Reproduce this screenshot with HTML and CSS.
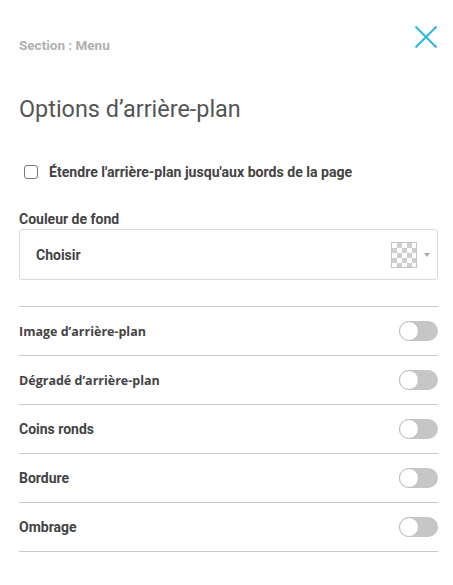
FILE: index.html
```html
<!DOCTYPE html>
<html lang="fr">
<head>
<meta charset="utf-8">
<title>Options d’arrière-plan</title>
<link rel="stylesheet" href="styles.css">
</head>
<body>
<div class="panel">
  <div class="header">
    <div class="crumb">Section : Menu</div>
    <svg class="close" width="24" height="24" viewBox="0 0 24 24" aria-label="Fermer">
      <path d="M1.5 1.5 L22.5 22.5 M22.5 1.5 L1.5 22.5" stroke="#27b8e2" stroke-width="2" fill="none"/>
    </svg>
  </div>

  <h1 class="title">Options d’arrière-plan</h1>

  <label class="check-row">
    <span class="checkbox"></span>
    <span class="check-label">Étendre l'arrière-plan jusqu'aux bords de la page</span>
  </label>

  <div class="field-label">Couleur de fond</div>
  <div class="select">
    <span class="select-text">Choisir</span>
    <span class="swatch"></span>
    <span class="caret"></span>
  </div>

  <div class="options">
    <div class="row"><span class="row-label alt">Image d’arrière-plan</span><span class="toggle"><span class="thumb"></span></span></div>
    <div class="row"><span class="row-label alt">Dégradé d’arrière-plan</span><span class="toggle"><span class="thumb"></span></span></div>
    <div class="row"><span class="row-label">Coins ronds</span><span class="toggle"><span class="thumb"></span></span></div>
    <div class="row"><span class="row-label">Bordure</span><span class="toggle"><span class="thumb"></span></span></div>
    <div class="row"><span class="row-label">Ombrage</span><span class="toggle"><span class="thumb"></span></span></div>
  </div>
</div>
</body>
</html>
```
FILE: styles.css
```css
* { box-sizing: border-box; }
html, body { margin: 0; padding: 0; background: #fff; }
body { font-family: Roboto, "Liberation Sans", sans-serif; color: #444; }

.panel { padding: 25px 15px 0 19px; }

.header { display: flex; justify-content: space-between; align-items: flex-start; height: 29px; }
.crumb { margin-top: 12px; font-size: 13.5px; line-height: 17px; font-weight: 700; color: #b0b0b0; }
.close { display: block; }

.title { margin: 42px 0 0; font-size: 23.4px; line-height: 27px; font-weight: 400; color: #555; }

.check-row { display: flex; align-items: center; height: 20px; margin-top: 39px; padding-left: 5px; }
.checkbox { width: 14px; height: 14px; border: 1.5px solid #777; border-radius: 3px; background: #fff; flex: none; }
.check-label { margin-left: 11px; font-size: 14.1px; font-weight: 700; color: #444; }

.field-label { margin-top: 29px; font-size: 14px; line-height: 16px; font-weight: 700; color: #444; }

.select { margin-top: 2px; height: 51px; border: 1px solid #dadada; border-radius: 3px; display: flex; align-items: center; padding: 0 7px 0 16px; }
.select-text { flex: 1; font-size: 14px; font-weight: 700; color: #444; }
.swatch { width: 26px; height: 26px; border: 1px solid #c4c4c4; background: repeating-conic-gradient(#cfcfcf 0 25%, #fff 0 50%) 0 0 / 10px 10px; }
.caret { margin-left: 7px; width: 0; height: 0; border-left: 3px solid transparent; border-right: 3px solid transparent; border-top: 4px solid #aaa; }

.options { margin-top: 26px; border-bottom: 1px solid #c8c8c8; }
.row { display: flex; align-items: center; justify-content: space-between; height: 49px; border-top: 1px solid #c8c8c8; }
.row-label { font-size: 14px; font-weight: 700; color: #444; }
.row-label.alt { font-family: "Open Sans", Roboto, sans-serif; font-weight: 700; font-size: 12.5px; }

.toggle { width: 39px; height: 20px; border-radius: 10px; background: #c6c6c6; display: flex; align-items: center; }
.thumb { width: 20px; height: 20px; border-radius: 50%; background: #fff; border: 1px solid #bdbdbd; }
```
